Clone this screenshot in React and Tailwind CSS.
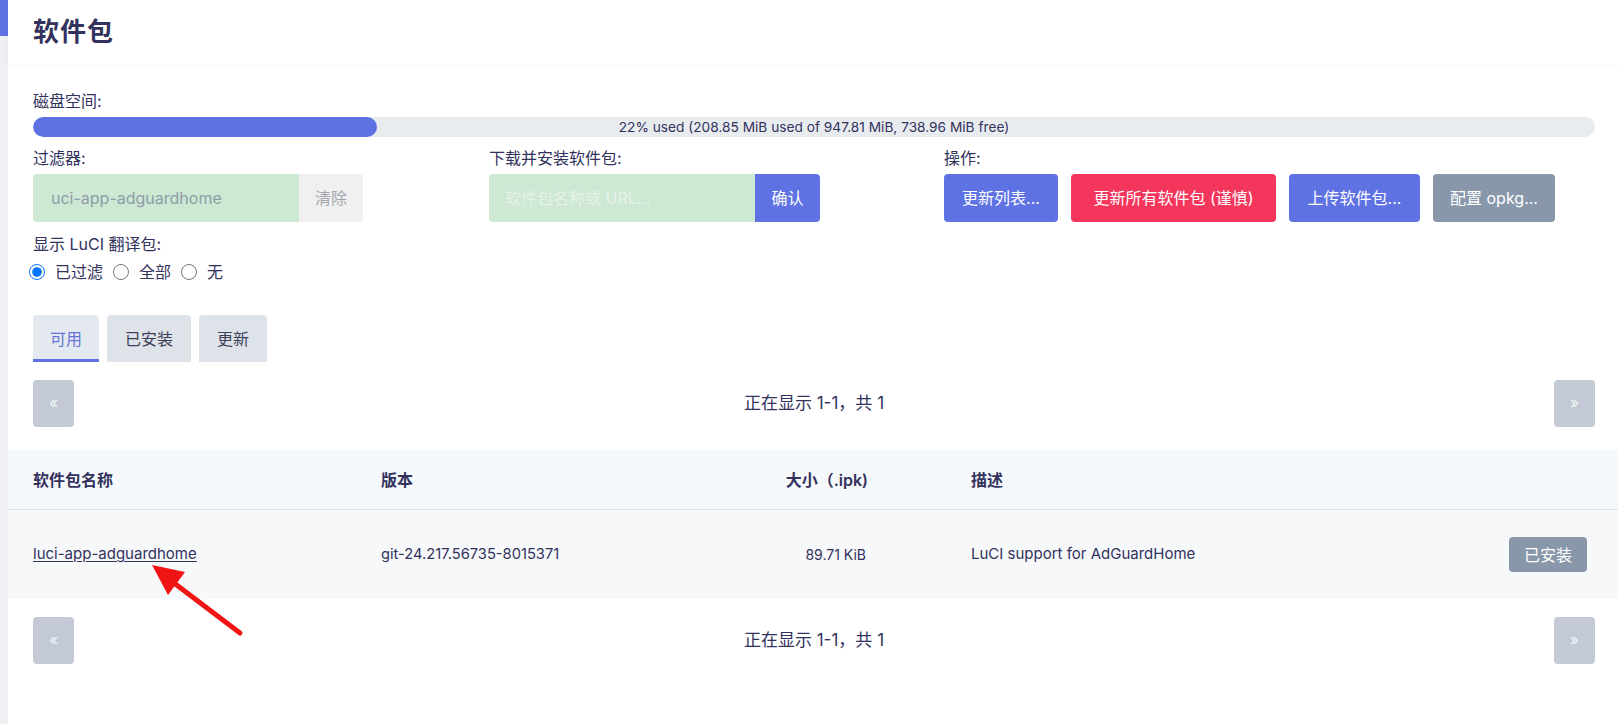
const font = { fontFamily: '"Inter", "Noto Sans CJK SC", sans-serif' };

function Pager() {
  return (
    <div className="flex items-center justify-between h-[47px]">
      <button className="w-[41px] h-[47px] rounded-[4px] bg-[#c3cad5] text-[#f4f6f9] text-[15px]">«</button>
      <span className="text-[17px] text-[#32325d]">正在显示 1-1，共 1</span>
      <button className="w-[41px] h-[47px] rounded-[4px] bg-[#c3cad5] text-[#f4f6f9] text-[15px]">»</button>
    </div>
  );
}

function Radio({ label, checked, first }) {
  return (
    <label className={`flex items-center ${first ? 'ml-[-4px]' : 'ml-[10px]'}`}>
      <input type="radio" name="i18n" defaultChecked={checked} className="w-[16px] h-[16px] mr-[10px] accent-[#0075ff]" />
      <span>{label}</span>
    </label>
  );
}

export default function App() {
  return (
    <div className="w-full h-[724px] bg-white flex text-[#32325d] relative overflow-hidden" style={font}>
      {/* sidebar edge */}
      <div className="w-[8px] bg-[#eef0f4] shrink-0">
        <div className="h-[36px] bg-[#5e72e4]" />
      </div>

      <div className="flex-1 min-w-0">
        <header className="h-[65px] flex items-center pl-[25px] pb-[2px] shadow-[0_2px_6px_rgba(0,0,0,0.035)]">
          <h2 className="text-[26px] font-bold tracking-[1px] text-[#32325d]">软件包</h2>
        </header>

        <div className="pl-[25px] pr-[23px]">
          <div className="pt-[24px] text-[16px] leading-[24px]">磁盘空间:</div>
          <div className="mt-[4px] h-[20px] rounded-full bg-[#e9ecef] relative overflow-hidden">
            <div className="h-full w-[22%] rounded-full bg-[#5e72e4]" />
            <div className="absolute inset-0 flex items-center justify-center text-[13.7px] text-[#32325d]">
              22% used (208.85 MiB used of 947.81 MiB, 738.96 MiB free)
            </div>
          </div>

          <div className="mt-[9px] grid grid-cols-[456px_455px_1fr] text-[16px]">
            <div>
              <div className="leading-[24px]">过滤器:</div>
              <div className="mt-[4px] flex h-[48px]">
                <div className="w-[266px] bg-[#cde8d3] rounded-l-[4px] flex items-center pl-[18px] text-[#8d9ea8]">uci-app-adguardhome</div>
                <button className="w-[64px] bg-[#f0f0f0] rounded-r-[4px] text-[#a2a7ad]">清除</button>
              </div>
            </div>
            <div>
              <div className="leading-[24px]">下载并安装软件包:</div>
              <div className="mt-[4px] flex h-[48px]">
                <div className="w-[266px] bg-[#cde8d3] rounded-l-[4px] flex items-center pl-[16px] text-[#e6f3e8]">软件包名称或 URL...</div>
                <button className="w-[65px] bg-[#5e72e4] rounded-r-[4px] text-white">确认</button>
              </div>
            </div>
            <div>
              <div className="leading-[24px]">操作:</div>
              <div className="mt-[4px] flex gap-[13px] h-[48px] text-white">
                <button className="w-[114px] rounded-[4px] bg-[#5e72e4]">更新列表...</button>
                <button className="w-[205px] rounded-[4px] bg-[#f5365c]">更新所有软件包 (谨慎)</button>
                <button className="w-[131px] rounded-[4px] bg-[#5e72e4]">上传软件包...</button>
                <button className="w-[122px] rounded-[4px] bg-[#8898aa]">配置 opkg...</button>
              </div>
            </div>
          </div>

          <div className="mt-[10px] text-[16px] leading-[24px]">显示 LuCI 翻译包:</div>
          <div className="mt-[4px] flex items-center text-[16px] leading-[24px]">
            <Radio label="已过滤" checked first />
            <Radio label="全部" />
            <Radio label="无" />
          </div>

          <div className="mt-[31px] flex gap-[8px] h-[47px] text-[16px]">
            <div className="px-[17px] flex items-center bg-[#e4e9ef] rounded-t-[4px] border-b-[3px] border-[#5e72e4] text-[#6675d6] pt-[3px]">可用</div>
            <div className="px-[18px] flex items-center bg-[#dde3e9] rounded-t-[4px] text-[#3d3f5a]">已安装</div>
            <div className="px-[18px] flex items-center bg-[#dde3e9] rounded-t-[4px] text-[#3d3f5a]">更新</div>
          </div>

          <div className="mt-[18px]">
            <Pager />
          </div>
        </div>

        <div className="mt-[23px]">
          <div className="flex items-center h-[60px] bg-[#f6f9fc] border-b border-[#dfe3e8] text-[16px] font-semibold">
            <div className="w-[373px] pl-[25px]">软件包名称</div>
            <div className="w-[300px]">版本</div>
            <div className="w-[187px] text-right">大小（.ipk)</div>
            <div className="flex-1 pl-[103px]">描述</div>
          </div>
          <div className="flex items-center h-[89px] bg-[#f7f8fa] text-[15px]">
            <div className="w-[373px] pl-[25px]"><a href="#" className="underline underline-offset-2">luci-app-adguardhome</a></div>
            <div className="w-[300px] text-[14.7px]">git-24.217.56735-8015371</div>
            <div className="w-[187px] text-right pr-[2px] text-[14px]">89.71 KiB</div>
            <div className="flex-1 pl-[103px]">LuCI support for AdGuardHome</div>
            <div className="pr-[31px]">
              <button className="w-[78px] h-[35px] rounded-[4px] bg-[#8898aa] text-white text-[16px]">已安装</button>
            </div>
          </div>
        </div>

        <div className="mt-[18px] pl-[25px] pr-[23px]">
          <Pager />
        </div>
      </div>

      {/* annotation arrow */}
      <svg className="absolute left-0 top-0 pointer-events-none" width="300" height="700" viewBox="0 0 300 700">
        <line x1="240" y1="633" x2="174" y2="583" stroke="#f01414" strokeWidth="5" strokeLinecap="round" />
        <polygon points="152,565 185,572 168,595" fill="#f01414" />
      </svg>
    </div>
  );
}
